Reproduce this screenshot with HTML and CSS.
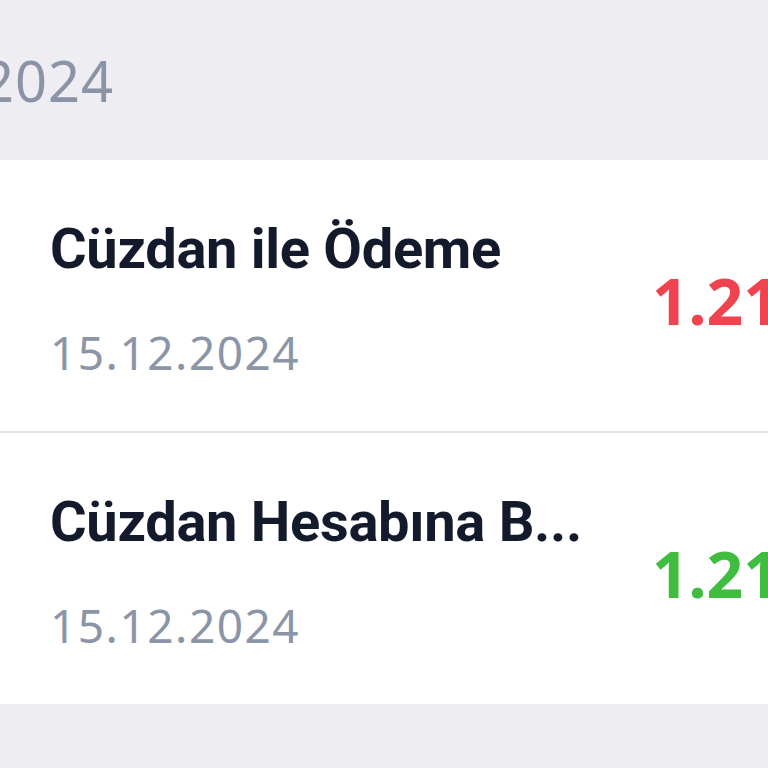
FILE: index.html
```html
<!DOCTYPE html>
<html lang="tr">
<head>
<meta charset="utf-8">
<title>Cüzdan Hareketleri</title>
<link rel="stylesheet" href="styles.css">
</head>
<body>
<div class="screen">
  <section class="group">
    <div class="group-head"><span class="group-title">2024</span></div>
    <div class="card">
      <div class="row">
        <div class="info">
          <div class="title">Cüzdan ile Ödeme</div>
          <div class="date">15.12.2024</div>
        </div>
        <div class="amount neg">1.210,00 ₺</div>
      </div>
      <div class="row">
        <div class="info">
          <div class="title">Cüzdan Hesabına B...</div>
          <div class="date">15.12.2024</div>
        </div>
        <div class="amount pos">1.210,00 ₺</div>
      </div>
    </div>
  </section>
  <section class="group">
    <div class="group-head next"><span class="group-title">11.2024</span></div>
  </section>
</div>
</body>
</html>
```
FILE: styles.css
```css
html, body {
  margin: 0;
  padding: 0;
  width: 768px;
  height: 768px;
  overflow: hidden;
  background: #eeedf2;
  font-family: "Noto Sans", "Open Sans", sans-serif;
}
.screen {
  display: flex;
  flex-direction: column;
}
.group-head {
  height: 160px;
  box-sizing: border-box;
  padding-top: 52px;
  margin-left: -18px;
}
.group-head.next {
  padding-top: 62px;
}
.group-title {
  font-size: 56px;
  line-height: 1;
  color: #8a94a6;
  letter-spacing: 1px;
  white-space: nowrap;
}
.card {
  background: #ffffff;
}
.row {
  display: grid;
  grid-template-columns: 602px auto;
  align-items: center;
  padding: 61px 0 56px 50px;
  white-space: nowrap;
}
.row + .row {
  border-top: 2px solid #e4e4ea;
}
.info {
  display: flex;
  flex-direction: column;
  gap: 52px;
}
.title {
  font-family: Roboto, "Noto Sans", sans-serif;
  font-size: 56px;
  line-height: 1;
  font-weight: 700;
  color: #121a2b;
  letter-spacing: -0.3px;
}
.date {
  font-size: 46px;
  line-height: 1;
  color: #8a95a7;
  letter-spacing: 1.5px;
}
.amount {
  font-size: 64px;
  line-height: 1;
  font-weight: 700;
  margin-top: 6px;
}
.neg { color: #ef4450; }
.pos { color: #3fbd3f; }
```
